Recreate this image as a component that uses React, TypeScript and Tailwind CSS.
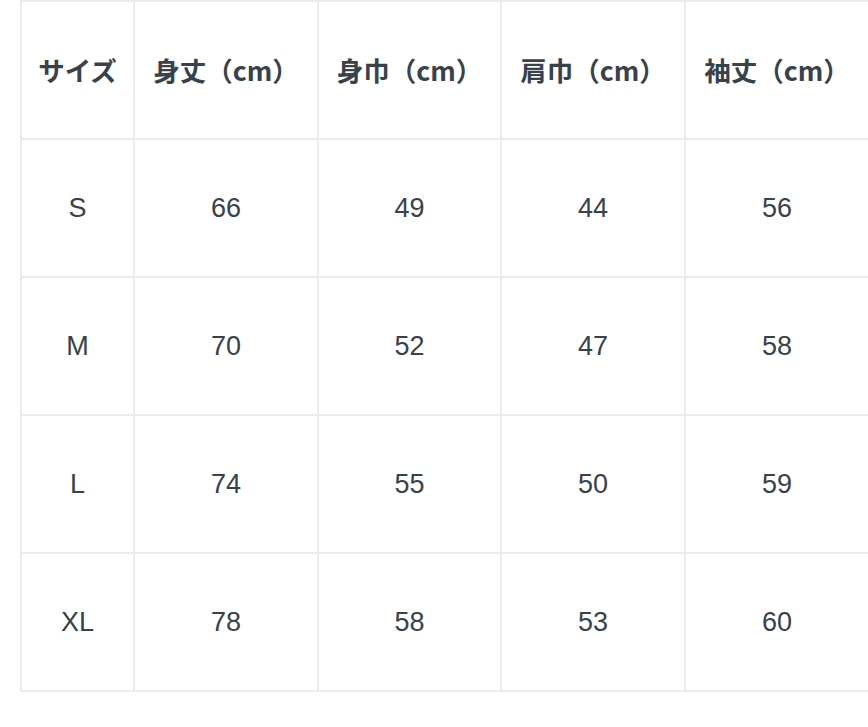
import React from "react";

const headers = ["サイズ", "身丈（cm）", "身巾（cm）", "肩巾（cm）", "袖丈（cm）"];
const rows = [
  ["S", "66", "49", "44", "56"],
  ["M", "70", "52", "47", "58"],
  ["L", "74", "55", "50", "59"],
  ["XL", "78", "58", "53", "60"],
];

export default function App() {
  return (
    <div className="w-[868px] h-[727px] overflow-hidden bg-white">
      <div className="ml-[20px] w-[850px] grid grid-cols-[111px_182px_181px_182px_182px] auto-rows-[136px] gap-[2px] bg-[#ebebeb] border-2 border-[#ebebeb] text-[#37424b]">
        {headers.map((h) => (
          <div
            key={h}
            className="bg-white flex items-center justify-center font-bold text-[26.5px] [font-family:'Noto_Sans_CJK_JP',sans-serif]"
          >
            {h}
          </div>
        ))}
        {rows.map((r) =>
          r.map((c, i) => (
            <div
              key={r[0] + i}
              className="bg-white flex items-center justify-center text-[27px] [font-family:'Liberation_Sans','Noto_Sans_CJK_JP',sans-serif]"
            >
              {c}
            </div>
          ))
        )}
      </div>
    </div>
  );
}
